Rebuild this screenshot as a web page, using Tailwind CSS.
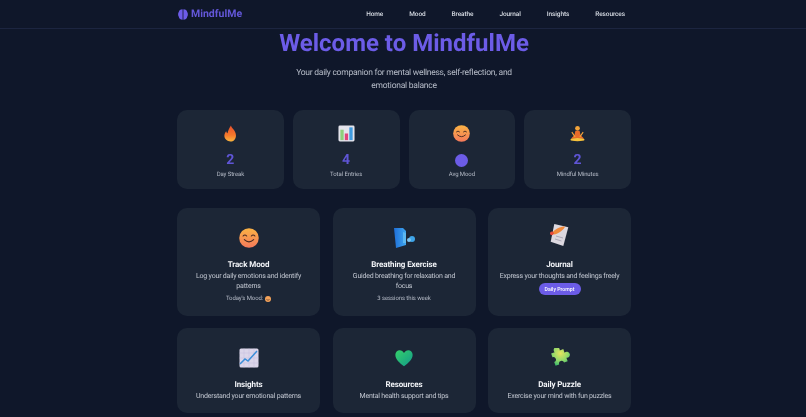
<!DOCTYPE html>
<html lang="en">
<head>
    <meta charset="UTF-8">
    <meta name="viewport" content="width=device-width, initial-scale=1.0">
    <title>MindfulMe</title>
    <script src="https://cdn.jsdelivr.net/npm/@tailwindcss/browser@4"></script>
</head>
<body class="bg-[#0f172a] h-[417px] overflow-hidden font-['Roboto',sans-serif] [text-rendering:geometricPrecision] text-white">
    <!-- Nav -->
    <nav class="h-[29px] border-b border-[#1c2540] transform-gpu">
        <div class="w-[454px] h-full ml-[177px] flex items-center justify-between">
            <div class="flex items-center gap-[3px] ml-[1px]">
                <svg class="w-[10px] h-[11px]" viewBox="0 0 10 11"><path d="M4.6.3C2.4.3.9 1.500.8 3 0 3.800-.2 6.800.8 7.700 1 9.500 2.800 10.800 4.600 10.700zM5.400.3C7.600.3 9.100 1.500 9.200 3c.8.800 1 3.800 0 4.700-.2 1.800-2 3.100-3.800 3z" fill="#6d5ce8"/></svg>
                <span class="text-[10.5px] font-bold text-[#6357d8]">MindfulMe</span>
            </div>
            <div class="flex gap-[26px] mr-[6px] pt-[1px] text-[6.5px] font-medium tracking-[-0.1px] text-[#d7dce4]">
                <a>Home</a><a>Mood</a><a>Breathe</a><a>Journal</a><a>Insights</a><a>Resources</a>
            </div>
        </div>
    </nav>

    <main class="w-[454px] ml-[177px] transform-gpu">
        <!-- Hero -->
        <div class="text-center">
            <h1 class="text-[24px] leading-[29px] font-bold text-[#6c5ce7]">Welcome to MindfulMe</h1>
            <p class="w-[240px] mx-auto mt-[9px] text-[8.5px] leading-[13px] tracking-[-0.25px] text-[#b6bcc8]">Your daily companion for mental wellness, self-reflection, and emotional balance</p>
        </div>

        <!-- Stats -->
        <div class="grid grid-cols-4 gap-[9px] mt-[17px]">
            <div class="h-[79px] rounded-[10px] bg-[#1c2636] flex flex-col items-center pt-[15px]">
                <svg class="w-[17px] h-[17px]" viewBox="0 0 18 18"><defs><linearGradient id="fl" x1="0" y1="0" x2="0" y2="1"><stop offset="0" stop-color="#e8502c"/><stop offset=".6" stop-color="#f5782c"/><stop offset="1" stop-color="#f9b53e"/></linearGradient></defs><path d="M9.500.5c.4 2.600 5.300 5.500 5.300 10.500 0 3.800-2.600 6.500-5.800 6.500S2.500 15 2.500 11.500c0-2.300 1-3.900 2-5 .2 1.200.6 1.900 1.300 2.300C6.500 6 7.800 3 9.500.5z" fill="url(#fl)"/></svg>
                <span class="mt-[9px] text-[14px] leading-[18px] font-bold text-[#5f55d6]">2</span>
                <span class="mt-[1px] text-[6px] leading-[10px] tracking-[-0.1px] text-[#b6bcc8]">Day Streak</span>
            </div>
            <div class="h-[79px] rounded-[10px] bg-[#1c2636] flex flex-col items-center pt-[15px]">
                <svg class="w-[17px] h-[17px]" viewBox="0 0 18 18"><rect x=".5" y=".5" width="17" height="17" rx="1.5" fill="#e4e4ec"/><rect x="2.500" y="5" width="3.500" height="11" fill="#8ed07a"/><rect x="7.200" y="9" width="3.500" height="7" fill="#e0457b"/><rect x="12" y="2.500" width="3.500" height="13.500" fill="#3f9be0"/></svg>
                <span class="mt-[9px] text-[14px] leading-[18px] font-bold text-[#5f55d6]">4</span>
                <span class="mt-[1px] text-[6px] leading-[10px] tracking-[-0.1px] text-[#b6bcc8]">Total Entries</span>
            </div>
            <div class="h-[79px] rounded-[10px] bg-[#1c2636] flex flex-col items-center pt-[15px]">
                <svg class="w-[17px] h-[17px]" viewBox="0 0 18 18"><defs><linearGradient id="sm1" x1="0" y1="0" x2="0" y2="1"><stop offset="0" stop-color="#fbb344"/><stop offset="1" stop-color="#f4795b"/></linearGradient></defs><circle cx="9" cy="9" r="8.800" fill="url(#sm1)"/><path d="M3.700 7.200q1.600-1.800 3.200 0M11.100 7.200q1.600-1.800 3.200 0M4.800 10.500q4.200 4 8.400 0" fill="none" stroke="#4a2a22" stroke-width="1" stroke-linecap="round"/></svg>
                <span class="mt-[12px] w-[13px] h-[13px] rounded-full bg-[#6c5ce7]"></span>
                <span class="mt-[3px] text-[6px] leading-[10px] tracking-[-0.1px] text-[#b6bcc8]">Avg Mood</span>
            </div>
            <div class="h-[79px] rounded-[10px] bg-[#1c2636] flex flex-col items-center pt-[15px]">
                <svg class="w-[17px] h-[17px]" viewBox="0 0 18 18"><circle cx="9" cy="3.500" r="2.500" fill="#f2a33a"/><path d="M6.800 6h4.400l1 4.500 3.800 4H2l3.800-4z" fill="#ea6a2a"/><path d="M3 7.500l3.500 5M15 7.500l-3.500 5" stroke="#f2a33a" stroke-width="1.200"/><ellipse cx="9" cy="15.500" rx="7.500" ry="1.800" fill="#f7c23c"/></svg>
                <span class="mt-[9px] text-[14px] leading-[18px] font-bold text-[#5f55d6]">2</span>
                <span class="mt-[1px] text-[6px] leading-[10px] tracking-[-0.1px] text-[#b6bcc8]">Mindful Minutes</span>
            </div>
        </div>

        <!-- Features -->
        <div class="grid grid-cols-3 gap-x-[12.5px] gap-y-[12px] mt-[19px]">
            <div class="h-[108px] rounded-[10px] bg-[#1c2636] flex flex-col items-center text-center pt-[20px] px-[14px]">
                <svg class="w-[20px] h-[20px]" viewBox="0 0 18 18"><defs><linearGradient id="sm2" x1="0" y1="0" x2="0" y2="1"><stop offset="0" stop-color="#fbb344"/><stop offset="1" stop-color="#f4795b"/></linearGradient></defs><circle cx="9" cy="9" r="8.800" fill="url(#sm2)"/><path d="M3.700 7.200q1.600-1.800 3.200 0M11.100 7.200q1.600-1.800 3.200 0M4.800 10.500q4.200 4 8.400 0" fill="none" stroke="#4a2a22" stroke-width="1" stroke-linecap="round"/></svg>
                <h3 class="mt-[11px] text-[8px] leading-[12px] font-bold tracking-[-0.1px] text-[#f1f3f7]">Track Mood</h3>
                <p class="text-[7px] leading-[10px] tracking-[-0.2px] text-[#c3c8d2]">Log your daily emotions and identify patterns</p>
                <p class="mt-[3px] flex items-center gap-[2px] text-[6px] leading-[10px] tracking-[-0.1px] text-[#b6bcc8]">Today's Mood: <svg class="w-[6px] h-[6px]" viewBox="0 0 6 6"><circle cx="3" cy="3" r="3" fill="#f4a35a"/><path d="M1.500 3.500q1.500 1.500 3 0" fill="none" stroke="#4a2a22" stroke-width=".6"/></svg></p>
            </div>
            <div class="h-[108px] rounded-[10px] bg-[#1c2636] flex flex-col items-center text-center pt-[20px] px-[14px]">
                <svg class="w-[22px] h-[20px] ml-[2px]" viewBox="0 0 22 20"><defs><linearGradient id="br" x1="0" y1="0" x2="1" y2="0"><stop offset="0" stop-color="#1f6fd8"/><stop offset="1" stop-color="#3fa6f0"/></linearGradient></defs><path d="M0 0h9l3 3v14l-10 3z" fill="url(#br)"/><path d="M9 4l3 1v10H9z" fill="#5cb8f2"/><circle cx="18" cy="11" r="3" fill="#3ea4e8"/><circle cx="15" cy="12" r="2" fill="#7cc6f5"/></svg>
                <h3 class="mt-[11px] text-[8px] leading-[12px] font-bold tracking-[-0.1px] text-[#f1f3f7]">Breathing Exercise</h3>
                <p class="text-[7px] leading-[10px] tracking-[-0.2px] text-[#c3c8d2]">Guided breathing for relaxation and focus</p>
                <p class="mt-[3px] text-[6px] leading-[10px] tracking-[-0.1px] text-[#b6bcc8]">3 sessions this week</p>
            </div>
            <div class="h-[108px] rounded-[10px] bg-[#1c2636] flex flex-col items-center text-center pt-[20px] px-[10px]">
                <svg class="w-[20px] h-[22px] -mt-[4px] mb-[2px]" viewBox="0 0 20 22"><path d="M4.300 0L18.300 3.300 13.300 22 .7 17.700z" fill="#dcd8e0"/><path d="M6 12l7 2M5 15l6.500 2" stroke="#9a96a8" stroke-width=".7"/><path d="M2 9c3-4 8-6.500 13-6.500-1 3-6 7-10.500 8z" fill="#f08a3c"/><circle cx="1.900" cy="9.300" r="1.900" fill="#e84a3a"/></svg>
                <h3 class="mt-[11px] text-[8px] leading-[12px] font-bold tracking-[-0.1px] text-[#f1f3f7]">Journal</h3>
                <p class="text-[7px] leading-[10px] tracking-[-0.2px] text-[#c3c8d2]">Express your thoughts and feelings freely</p>
                <button class="mt-[2px] h-[12px] w-[42px] rounded-full bg-[#6c5ce7] text-[5.2px] leading-[12px] font-medium text-white">Daily Prompt</button>
            </div>
            <div class="h-[85px] rounded-[10px] bg-[#1c2636] flex flex-col items-center text-center pt-[20px] px-[14px]">
                <svg class="w-[20px] h-[20px]" viewBox="0 0 20 20"><rect x=".5" y=".5" width="19" height="19" rx="1.5" fill="#dcd6ea"/><path d="M5 .5v19M10 .5v19M15 .5v19M.5 5h19M.5 10h19M.5 15h19" stroke="#c6bedc" stroke-width=".5"/><path d="M1 16l5-5 3 2 9-10" fill="none" stroke="#3b8ed8" stroke-width="1.500"/></svg>
                <h3 class="mt-[11px] text-[8px] leading-[12px] font-bold tracking-[-0.1px] text-[#f1f3f7]">Insights</h3>
                <p class="text-[7px] leading-[10px] tracking-[-0.2px] text-[#c3c8d2]">Understand your emotional patterns</p>
            </div>
            <div class="h-[85px] rounded-[10px] bg-[#1c2636] flex flex-col items-center text-center pt-[20px] px-[14px]">
                <svg class="w-[20px] h-[20px]" viewBox="-1 -1 22 22"><defs><linearGradient id="hr" x1="0" y1="0" x2="1" y2="1"><stop offset="0" stop-color="#35d06a"/><stop offset="1" stop-color="#129a8a"/></linearGradient></defs><path d="M10 19C5 15.500.5 11.500.5 6.500c0-3 2.200-5 4.700-5C7.300 1.500 9 2.800 10 4.500c1-1.700 2.700-3 4.800-3 2.500 0 4.700 2 4.700 5 0 5-4.500 9-9.500 12.500z" fill="url(#hr)"/></svg>
                <h3 class="mt-[11px] text-[8px] leading-[12px] font-bold tracking-[-0.1px] text-[#f1f3f7]">Resources</h3>
                <p class="text-[7px] leading-[10px] tracking-[-0.2px] text-[#c3c8d2]">Mental health support and tips</p>
            </div>
            <div class="h-[85px] rounded-[10px] bg-[#1c2636] flex flex-col items-center text-center pt-[20px] px-[14px]">
                <svg class="w-[20px] h-[20px]" viewBox="2 2 17 17"><defs><radialGradient id="pz" gradientUnits="userSpaceOnUse" cx="12" cy="7" r="11"><stop offset="0" stop-color="#e6e45e"/><stop offset=".6" stop-color="#8ed86a"/><stop offset="1" stop-color="#35b56a"/></radialGradient></defs><g transform="rotate(-20 10 10)"><path d="M4.500 4.500h3.200a2.600 2.600 0 1 1 4.600 0h3.200v3.200a2.600 2.600 0 1 1 0 4.600v3.200h-3.300a2.200 2.200 0 1 0-4.400 0H4.500v-3.300a2.200 2.200 0 1 0 0-4.400z" fill="url(#pz)"/></g></svg>
                <h3 class="mt-[11px] text-[8px] leading-[12px] font-bold tracking-[-0.1px] text-[#f1f3f7]">Daily Puzzle</h3>
                <p class="text-[7px] leading-[10px] tracking-[-0.2px] text-[#c3c8d2]">Exercise your mind with fun puzzles</p>
            </div>
        </div>
    </main>
</body>
</html>
